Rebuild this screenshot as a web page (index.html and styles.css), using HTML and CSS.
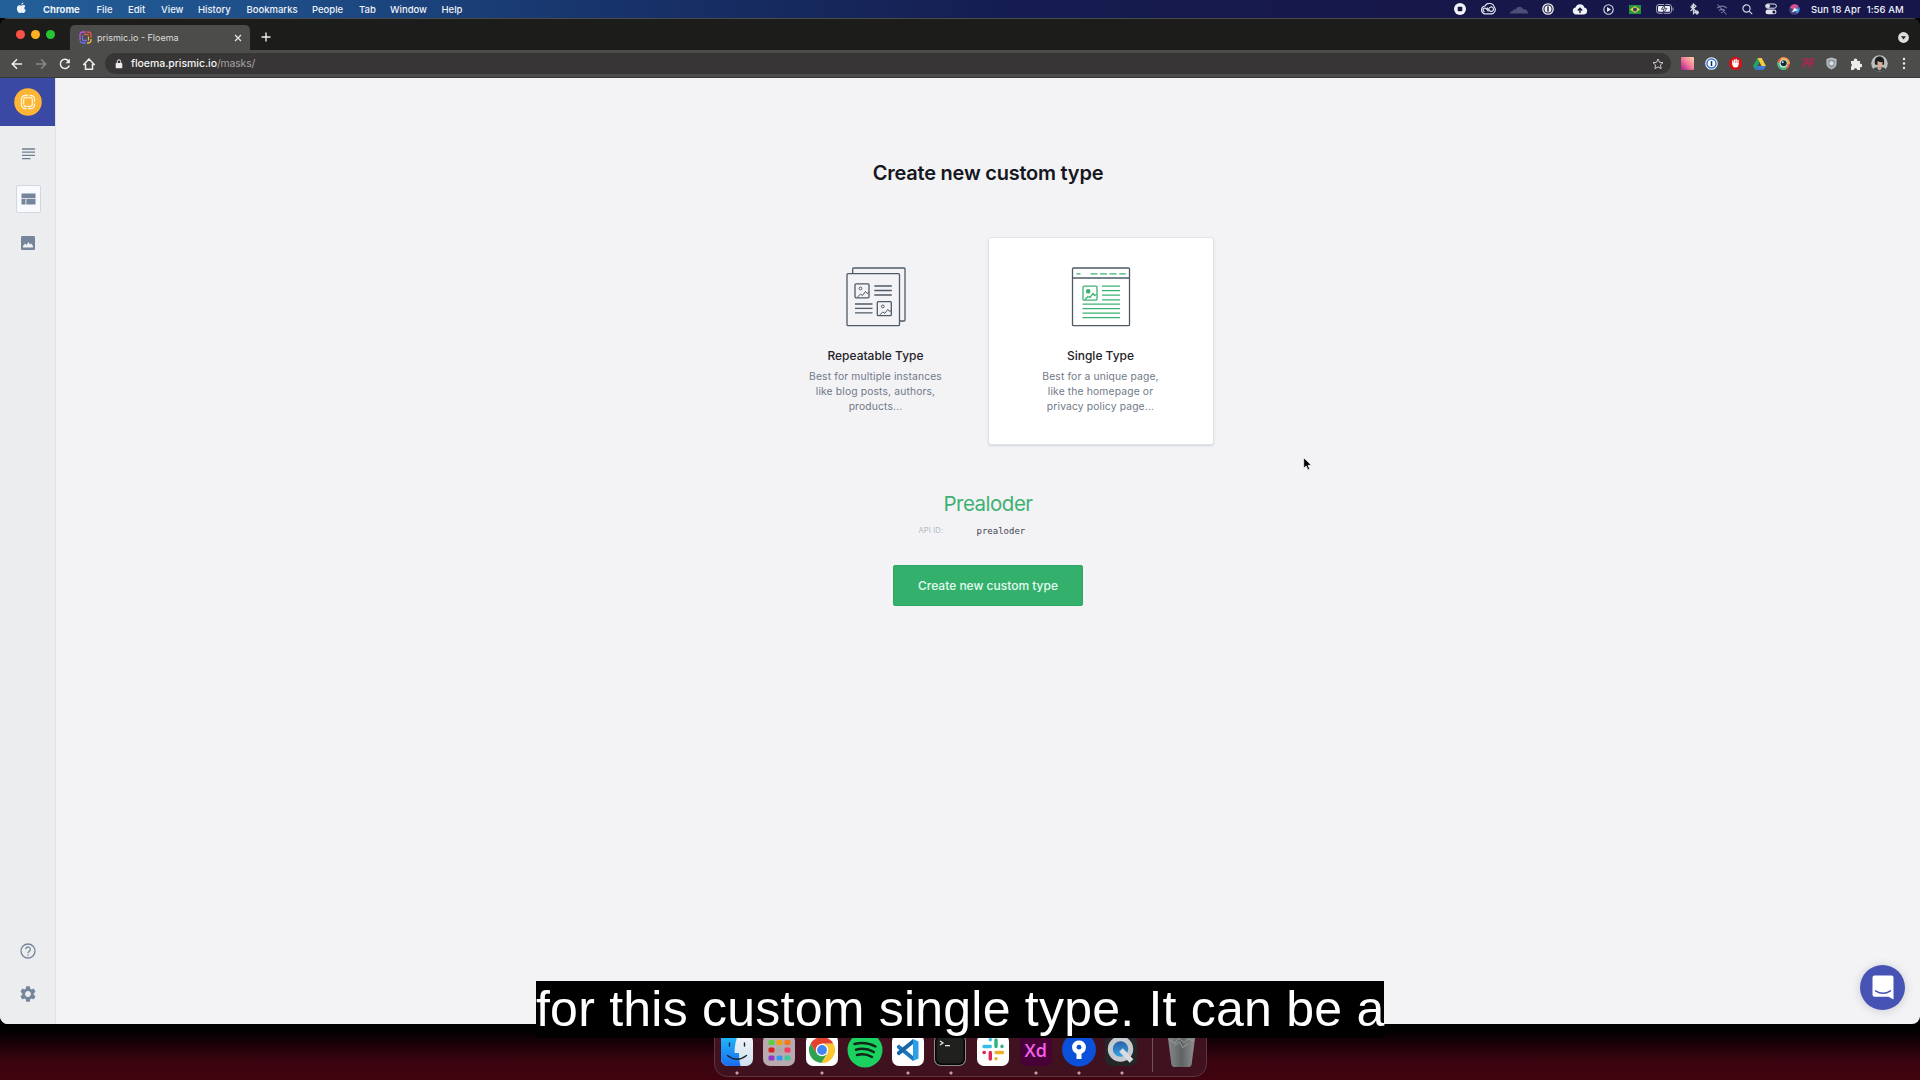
FILE: index.html
```html
<!DOCTYPE html>
<html lang="en">
<head>
<meta charset="utf-8">
<title>prismic.io - Floema</title>
<link rel="stylesheet" href="styles.css">
</head>
<body>
<header class="menubar">
  <svg class="apple" viewBox="0 0 20 24"><path fill="#eef4fa" d="M13.600 1c.2 2-1.900 4.300-4 4.300C9.400 3.300 11.500 1.200 13.600 1zM17 8c-2.800 1.800-2.400 5.800.8 7.200-.8 2.500-2.600 5.300-4.300 5.300-1.400 0-1.900-.8-3.500-.8s-2.200.8-3.500.8C4 20.500 1.500 16 1.500 12c0-4 2.400-6.200 5-6.200 1.500 0 2.600.9 3.600.9s2.200-1 4-1c1.200 0 2.300.7 2.900 2.300z"/></svg>
  <nav class="menus"><b>Chrome</b><span>File</span><span>Edit</span><span>View</span><span>History</span><span>Bookmarks</span><span>People</span><span>Tab</span><span>Window</span><span>Help</span></nav>
  <div class="status">
    <svg width="12" height="12" viewBox="0 0 12 12"><circle cx="6" cy="6" r="6" fill="#f2f2fa"/><rect x="3.700" y="3.700" width="4.600" height="4.600" rx=".7" fill="#17173f"/></svg>
    <svg width="16" height="12" viewBox="0 0 16 12" fill="none" stroke="#e4e4f0" stroke-width="1.200"><path d="M4.500 10.800h7a4 4 0 0 0 2.800-6.600A5 5 0 0 0 5 3 4 4 0 0 0 4.500 10.800z"/><path d="M8.500 8.300 6.200 5.600a1.800 1.800 0 1 0-1.500 3.100M7 4.700l3 3.300a2.200 2.200 0 1 0 .3-3.800c-.7.300-1 .8-1.300 1.300"/></svg>
    <svg width="18" height="9" viewBox="0 0 18 9" fill="#4d4e76"><path d="M0 8.500c0-2 1.500-2.700 2.700-2.500C3.200 4 5 4 5.500 4.800 6.500 1.500 11 .5 13 4.300c3-.5 5 1.500 5 4.200z"/></svg>
    <svg width="12" height="12" viewBox="0 0 12 12"><circle cx="6" cy="6" r="5.200" fill="none" stroke="#eee" stroke-width="1.300"/><circle cx="6" cy="6" r="3.500" fill="#eee"/><rect x="5.300" y="3.400" width="1.400" height="5.200" fill="#17173f"/></svg>
    <svg width="16" height="11" viewBox="0 0 16 11"><path fill="#f2f2fa" d="M4 10.500a3.500 3.500 0 0 1-.5-6.900 4.600 4.600 0 0 1 8.800-.2A3.600 3.600 0 0 1 12 10.500z"/><path d="M8 9V4.500M5.800 6.400 8 4.200l2.200 2.200" fill="none" stroke="#17173f" stroke-width="1.400"/></svg>
    <svg width="11" height="11" viewBox="0 0 11 11"><circle cx="5.500" cy="5.500" r="4.700" fill="none" stroke="#d9d9e6" stroke-width="1.100"/><path d="M4 3v5l4-2.500z" fill="#e6e6f0"/></svg>
    <svg width="12" height="9" viewBox="0 0 12 9"><rect width="12" height="9" fill="#229442"/><path d="m6 1 5 3.500L6 8 1 4.500z" fill="#f2cf32"/><circle cx="6" cy="4.500" r="2" fill="#283980"/></svg>
    <svg width="18" height="10" viewBox="0 0 18 10"><rect x=".5" y=".5" width="15" height="8.800" rx="2.500" fill="none" stroke="#a5a5bd"/><rect x="2" y="2" width="12" height="5.800" rx="1" fill="#f2f2f8"/><path d="M17 3.500v3" stroke="#a5a5bd"/><path d="M9 0 5.500 5.200H8L7 10l3.800-5.700H8.200z" fill="#fff" stroke="#17173f" stroke-width=".8"/></svg>
    <svg width="10" height="12" viewBox="0 0 10 12" fill="none" stroke="#d4d4df" stroke-width="1.200"><path d="M1.500 3.500 7 8 4.500 10.500V1L7 3.200 1.500 8"/><path d="M3.500 1.500v4M8 7.500v4M6 9.500h4" stroke-width="1.800"/></svg>
    <svg width="12" height="11" viewBox="0 0 12 11" fill="none" stroke="#77789c" stroke-width="1.100"><path d="M1 4.200c3-2.500 7-2.500 10 0M3 6.500c2-1.500 4-1.500 6 0M5 8.600q1-.8 2 0M1.500.5l9 10"/></svg>
    <svg width="11" height="11" viewBox="0 0 11 11" fill="none" stroke="#d2d2e0" stroke-width="1.200"><circle cx="4.500" cy="4.500" r="3.600"/><path d="m7.200 7.200 3 3"/></svg>
    <svg width="12" height="12" viewBox="0 0 12 12"><rect x=".6" y="1" width="10.800" height="4.200" rx="2.100" fill="none" stroke="#e2e2ee"/><circle cx="3" cy="3.100" r="2" fill="#e2e2ee"/><rect x=".5" y="6.500" width="11" height="4.800" rx="2.400" fill="#e2e2ee"/><circle cx="8.900" cy="8.900" r="1.500" fill="#17173f"/></svg>
    <svg width="11" height="11" viewBox="0 0 11 11"><circle cx="5.500" cy="5.500" r="5.300" fill="#47427c"/><path d="M1 3.500A5 5 0 0 1 9.500 2L5.500 6z" fill="#df4e92"/><path d="M5 5.500 10 3a5 5 0 0 1-2 6.500z" fill="#3b90da"/><path d="m2.500 8.500 3-4.500L9 6z" fill="#eefaff"/></svg>
  </div>
  <div class="clock"><span>Sun 18 Apr</span><span>1:56 AM</span></div>
</header>

<div class="window">
  <div class="tabstrip">
    <div class="lights"><i class="red"></i><i class="amber"></i><i class="green"></i></div>
    <div class="tab">
      <svg width="13" height="13" viewBox="0 0 13 13" fill="none" stroke-width="1.300"><path d="M1 9V4a3 3 0 0 1 3-3h3" stroke="#b65ad6"/><path d="M8 1h1a3 3 0 0 1 3 3v3M4.500 3.500h4a1 1 0 0 1 1 1" stroke="#e2574b"/><path d="M12 8v1a3 3 0 0 1-3 3H8M9.500 5.500v4" stroke="#e8b64a"/><path d="M7 12H4a3 3 0 0 1-3-2.500M8 9.500H4.500a1 1 0 0 1-1-1V4.500" stroke="#6c6ff0"/></svg>
      <span>prismic.io - Floema</span>
      <svg class="close" width="8" height="8" viewBox="0 0 8 8"><path d="m1 1 6 6M7 1 1 7" stroke="#e6e6e6" stroke-width="1.200"/></svg>
    </div>
    <svg class="plus" width="10" height="10" viewBox="0 0 10 10"><path d="M5 .5v9M.5 5h9" stroke="#eee" stroke-width="1.400"/></svg>
    <svg class="tabsearch" width="11" height="11" viewBox="0 0 11 11"><circle cx="5.500" cy="5.500" r="5.400" fill="#dedede"/><path d="M3 4.200h5L5.500 7.500z" fill="#222"/></svg>
  </div>
  <div class="toolbar">
    <div class="navs">
      <svg viewBox="0 0 12 12"><path d="M11 6H1.500M6 1.300 1.300 6 6 10.700" stroke="#eee"/></svg>
      <svg viewBox="0 0 12 12"><path d="M1 6h9.500M6 1.300 10.700 6 6 10.700" stroke="#898988"/></svg>
      <svg viewBox="0 0 12 12"><path d="M10.300 7.500A4.600 4.600 0 1 1 9.600 3" stroke="#eee"/><path d="M10.900.8v4.400H6.500z" fill="#eee" stroke="none"/></svg>
      <svg viewBox="0 0 12 12"><path d="M.7 6.500 6 1l5.300 5.500H9.500v4.700h-7V6.500z" stroke="#eee"/></svg>
    </div>
    <div class="omnibox">
      <svg width="8" height="10" viewBox="0 0 8 10"><rect x=".7" y="4" width="6.600" height="5.300" rx=".7" fill="#ececec"/><path d="M2.300 4V2.500a1.700 1.700 0 0 1 3.400 0V4" fill="none" stroke="#ececec" stroke-width="1"/></svg>
      <span class="url"><b>floema.prismic.io</b>/masks/</span>
      <svg class="star" width="12" height="12" viewBox="0 0 12 12"><path d="m6 1 1.500 3.300 3.500.4-2.600 2.400.7 3.500L6 8.900l-3.100 1.700.7-3.500L1 4.700l3.500-.4z" fill="none" stroke="#cfcfcf"/></svg>
    </div>
    <div class="extensions">
      <svg width="13" height="13" viewBox="0 0 13 13"><defs><linearGradient id="g1" x1="0" y1="1" x2="1" y2="0"><stop offset="0" stop-color="#a51a8f"/><stop offset=".5" stop-color="#f37a98"/><stop offset="1" stop-color="#ffd6a5"/></linearGradient></defs><rect width="13" height="13" rx="1" fill="url(#g1)"/></svg>
      <svg width="13" height="13" viewBox="0 0 13 13"><circle cx="6.500" cy="6.500" r="6.300" fill="#eef3fb"/><circle cx="6.500" cy="6.500" r="4.500" fill="#fff" stroke="#3377d1" stroke-width="1.500"/><rect x="5.700" y="4" width="1.600" height="5" rx=".6" fill="#17345f"/></svg>
      <svg width="13" height="13" viewBox="0 0 13 13"><path d="M4 0h5l4 4v5l-4 4H4L0 9V4z" fill="#cf1518"/><path d="M3.800 6.500V4M5.500 6V2.800M7.200 6V2.500M9 7V3.500" stroke="#fff" stroke-width="1.300" stroke-linecap="round"/><path d="M3.200 6h6.400c0 3-.6 4.500-3 4.500S3.200 9 3.200 6z" fill="#fff"/></svg>
      <svg width="13" height="12" viewBox="0 0 13 12"><path d="M4.500 0 0 8l2.200 3.800L6.600 4z" fill="#23a566"/><path d="M4.500 0h4.200L13 8H8.600z" fill="#f8cd3c"/><path d="M4.500 8H13l-2.200 3.800H2.200z" fill="#3e7ae0"/></svg>
      <svg width="13" height="13" viewBox="0 0 13 13"><circle cx="6.500" cy="6.500" r="6.300" fill="#e9643f"/><path d="M.3 5A6.300 6.300 0 0 0 10 11.700L6 7z" fill="#43b985"/><path d="M3 1.300A6.300 6.300 0 0 1 12.800 7L7 6z" fill="#f2a355"/><circle cx="6.500" cy="6.500" r="4" fill="#d7f1ec"/><circle cx="6.700" cy="6.300" r="3" fill="#142d34"/><circle cx="5.700" cy="5.200" r=".9" fill="#fff"/></svg>
      <svg width="14" height="11" viewBox="0 0 14 11" fill="none" stroke="#9d2c50" stroke-width="2"><path d="M1 1.500h5.500L6 4.500 1 9.500M2 5h6l2.500 5M8 1.500h4.500L10 5.500h3M6 1.500h3"/></svg>
      <svg width="11" height="13" viewBox="0 0 11 13"><path d="M5.500.5 10.500 2v5c0 3-3 4.500-5 5.500C3.500 11.500.5 10 .5 7V2z" fill="#b9bec4"/><path d="M5.500 2.300 9 3.300V7c0 2-2 3-3.500 4C4 10 2 9 2 7V3.300z" fill="#9299a1"/><circle cx="5.500" cy="6.200" r="2" fill="#dfe2e5"/></svg>
      <svg width="12" height="12" viewBox="0 0 12 12"><path d="M1 3h2.800a1.800 1.800 0 1 1 3.400 0H10v2.800a1.800 1.800 0 1 1 0 3.400V12H7.300a1.800 1.800 0 0 0-3.600 0H1V8.500A1.700 1.700 0 0 0 1 5.500z" fill="#ececec"/></svg>
      <svg width="17" height="17" viewBox="0 0 17 17"><defs><clipPath id="av"><circle cx="8.500" cy="8.500" r="8.300"/></clipPath></defs><g clip-path="url(#av)"><rect width="17" height="17" fill="#b9bdbb"/><path d="M1 17c0-4 4-5 7.500-5S16 13 16 17z" fill="#39434e"/><path d="M6.500 10h4v4l-2 1.500-2-1.500z" fill="#cda38f"/><ellipse cx="8.600" cy="7.800" rx="3" ry="3.800" fill="#d7ad98"/><path d="M4 9.500C3 3.500 5.500 1.500 8.500 1.500S14 3.500 13 9.500L11.500 10V7Q8.500 7.500 6.500 6V10z" fill="#1d1d20"/></g></svg>
      <svg width="4" height="13" viewBox="0 0 4 13" fill="#ececec"><circle cx="2" cy="2" r="1.200"/><circle cx="2" cy="6.500" r="1.200"/><circle cx="2" cy="11" r="1.200"/></svg>
    </div>
  </div>

  <div class="page">
    <aside class="sidebar">
      <div class="logo"><svg width="28" height="28" viewBox="0 0 28 28"><circle cx="14" cy="14" r="13.800" fill="#fdb536"/><g fill="none" stroke="#fff4d8" stroke-width="1.300"><path d="M7.500 18v-7a3.500 3.500 0 0 1 3.500-3.500h3M15.500 7.500H17a3.500 3.500 0 0 1 3.500 3.500v3M20.500 15.500V17a3.500 3.500 0 0 1-3.500 3.500h-3M12.500 20.500H11a3.500 3.500 0 0 1-3.500-3.500"/><path d="M9.700 16v-4.500q0-1.800 1.800-1.800H18M12 9.700h4.500q1.800 0 1.800 1.800V18M18.300 12v4.500q0 1.800-1.800 1.800H10M16 18.300h-4.500q-1.800 0-1.800-1.800" /></g></svg></div>
      <nav class="side-nav">
        <a class="side-link"><svg width="13" height="12" viewBox="0 0 13 12" stroke="#6f7f92" stroke-width="1.300"><path d="M0 1h13M0 4.200h13M0 7.400h13M0 10.600h8.500"/></svg></a>
        <a class="side-link selected"><svg width="15" height="12" viewBox="0 0 15 12" fill="#75859b"><path d="M.5.500h14v4.700H.5zM.5 6h4v5.500h-4zM5.300 6h9.200v5.500H5.300z"/></svg></a>
        <a class="side-link"><svg width="14" height="14" viewBox="0 0 14 14"><rect width="14" height="14" rx="1.300" fill="#75859b"/><path d="M2 11.500V10l2-2.500L5.500 9l2-3L9 8.500l1.200-1L12 10v1.500z" fill="#eef2f4"/></svg></a>
      </nav>
      <nav class="side-foot">
        <svg width="16" height="16" viewBox="0 0 16 16" fill="none" stroke="#75859b" stroke-width="1.300"><circle cx="8" cy="8" r="7"/><path d="M5.700 6.300a2.300 2.300 0 1 1 3.600 1.900C8.300 8.900 8 9.200 8 10.200M8 11.400v1.300"/></svg>
        <svg width="16" height="16" viewBox="2 2 20 20"><path fill="#75859b" d="M19.140 12.940c.04-.3.060-.61.060-.94 0-.32-.02-.64-.07-.94l2.030-1.580a.49.490 0 0 0 .12-.61l-1.920-3.320a.488.488 0 0 0-.59-.22l-2.390.96c-.5-.38-1.030-.7-1.620-.94l-.36-2.540a.484.484 0 0 0-.48-.41h-3.840c-.24 0-.43.170-.47.410l-.36 2.540c-.59.240-1.130.57-1.620.94l-2.390-.96c-.22-.08-.47 0-.59.220L2.740 8.870c-.12.210-.08.470.12.610l2.030 1.580c-.05.300-.09.630-.09.940s.02.640.07.940l-2.030 1.580a.49.490 0 0 0-.12.610l1.920 3.320c.12.220.37.290.59.220l2.390-.96c.5.380 1.030.7 1.620.94l.36 2.540c.05.240.24.410.48.410h3.840c.24 0 .44-.17.470-.41l.36-2.540c.59-.24 1.130-.56 1.620-.94l2.390.96c.22.080.47 0 .59-.22l1.920-3.320c.12-.22.070-.47-.12-.61zM12 15.600A3.610 3.610 0 0 1 8.400 12c0-1.980 1.620-3.600 3.600-3.600s3.600 1.620 3.600 3.600-1.620 3.600-3.600 3.600z"/></svg>
      </nav>
    </aside>
    <main class="content">
      <h1>Create new custom type</h1>
      <div class="types">
        <section class="type">
          <svg width="60" height="60" viewBox="0 0 60 60" fill="none" stroke="#4f5a67" stroke-width="1.300"><rect x="1" y="6.700" width="52.500" height="52" rx="1"/><path d="M6.700 6.700V2q0-1 1-1H58q1 0 1 1v51q0 1-1 1h-4.500"/><rect x="9" y="16.800" width="14" height="14" rx="1"/><rect x="31.300" y="34.700" width="14" height="14" rx="1"/><path d="M28.300 19h17.500M28.300 23.500h17.500M28.300 28h17.500M9 37h17.500M9 41.400h17.500M9 45.900h17.500"/><g stroke-width="1"><path d="m11.500 30 3-3 2 1.500 3-4 1.500 2 2-1M33.800 47.900l3-3 2 1.500 3-4 1.500 2 2-1"/><circle cx="14.500" cy="21.500" r="1.400"/><circle cx="36.800" cy="39.400" r="1.400"/></g></svg>
          <h2>Repeatable Type</h2>
          <p>Best for multiple instances<br>like blog posts, authors,<br>products...</p>
        </section>
        <section class="type chosen">
          <svg width="60" height="60" viewBox="0 0 60 60" fill="none" stroke="#4f5a67" stroke-width="1.300"><rect x="1.500" y="1" width="57" height="57.700" rx="1"/><path d="M1.500 11h57"/><g stroke="#3bb271"><path d="M5.500 6.800h4M19.500 6.800h7M29 6.800h7M38.500 6.800h7M48.300 6.800h6.500M31 19.200h18M31 23.600h18M31 28.200h18M31 32.800h18M11.500 37.200h37.500M11.500 41.600h37.500M11.500 46.200h37.500M11.500 50.700h37.500"/><rect x="12" y="19.200" width="14" height="14" rx="1"/><path d="m14 32.500 3-3 2 1 3-4 1.500 2 2-1"/><circle cx="17.200" cy="24.300" r="1.700" fill="#3bb271"/></g></svg>
          <h2>Single Type</h2>
          <p>Best for a unique page,<br>like the homepage or<br>privacy policy page...</p>
        </section>
      </div>
      <div class="name">Prealoder</div>
      <div class="api"><span>API ID:</span><code>prealoder</code></div>
      <button class="create">Create new custom type</button>
    </main>
    <div class="chat"><svg width="22" height="25" viewBox="0 0 22 25"><path d="M2.500.5h17a2 2 0 0 1 2 2V24.500l-5-2.800h-14a2 2 0 0 1-2-2V2.500a2 2 0 0 1 2-2z" fill="#fff"/><path d="M3.500 15.800q7.500 5 15 0" fill="none" stroke="#4653b4" stroke-width="1.400" stroke-linecap="round"/></svg></div>
  </div>
</div>

<footer class="dock">
  <svg class="app" viewBox="0 0 32 32"><defs><linearGradient id="f1" x2="0" y2="1"><stop stop-color="#1fc0fb"/><stop offset="1" stop-color="#1c6cf0"/></linearGradient><linearGradient id="f2" x2="0" y2="1"><stop stop-color="#f4f4f6"/><stop offset="1" stop-color="#cfe0f0"/></linearGradient></defs><rect width="32" height="32" rx="7" fill="url(#f2)"/><path d="M7 0h10.500C15 5 13.500 12 13.500 19H18c0 5 .5 9 1.500 13H7a7 7 0 0 1-7-7V7a7 7 0 0 1 7-7z" fill="url(#f1)"/><path d="M8.500 9v3M23.500 9v3M6.500 21.500q9.500 7.500 19 0" fill="none" stroke="#15263a" stroke-width="1.400" stroke-linecap="round"/></svg>
  <svg class="app" viewBox="0 0 32 32"><rect width="32" height="32" rx="7" fill="#b8aaae"/><g><rect x="5.500" y="6" width="6" height="5" rx="1.500" fill="#57d23e"/><rect x="13.500" y="6" width="6" height="5" rx="1.500" fill="#f3a10c"/><rect x="21.500" y="6" width="6" height="5" rx="1.500" fill="#f57720"/><rect x="5.500" y="13.500" width="6" height="5" rx="1.500" fill="#d82222"/><rect x="13.500" y="13.500" width="6" height="5" rx="1.500" fill="#aaa9ac"/><rect x="21.500" y="13.500" width="6" height="5" rx="1.500" fill="#f43d60"/><rect x="5.500" y="21.500" width="6" height="5" rx="1.500" fill="#9038c9"/><rect x="13.500" y="21.500" width="6" height="5" rx="1.500" fill="#3199f3"/><rect x="21.500" y="21.500" width="6" height="5" rx="1.500" fill="#45c69c"/></g></svg>
  <svg class="app" viewBox="0 0 32 32"><rect width="32" height="32" rx="7" fill="#fff"/><path d="M4.700 9.500A13 13 0 0 0 15.500 29L21.500 19 16 16l-5.500 3z" fill="#2fa24d"/><path d="M27.300 9.500A13 13 0 0 1 15.500 29l6-10L16 9.500z" fill="#fbc62f"/><path d="M4.700 9.500 10.400 19 16 9.500h11.300A13 13 0 0 0 4.700 9.500z" fill="#e3402f"/><circle cx="16" cy="16" r="6.200" fill="#fff"/><circle cx="16" cy="16" r="4.900" fill="#4285f0"/></svg>
  <svg class="app" viewBox="0 0 32 32" overflow="visible"><circle cx="16" cy="16" r="17.500" fill="#1bd15f"/><path d="M5.500 10q11-3 21 2.500M7 15.700q9.500-2.500 17.800 2.300M8 21q8-2 15 2" fill="none" stroke="#102817" stroke-width="2.500" stroke-linecap="round"/></svg>
  <svg class="app" viewBox="0 0 32 32"><rect width="32" height="32" rx="7" fill="#fff"/><path d="m21 5 5.500 2.500v17L21 27z" fill="#2b9fe8"/><path d="m5 12 2-1.500L21 22v5L5 14z" fill="#1b76bd"/><path d="m5 20 2 1.500L21 10V5L5 18z" fill="#1568a8"/></svg>
  <svg class="app" viewBox="0 0 32 32"><rect width="32" height="32" rx="7" fill="#8e8e8e"/><rect x="1" y="1" width="30" height="30" rx="6" fill="#050505"/><rect x="2.500" y="2.500" width="27" height="27" rx="5" fill="#20211f"/><path d="m6 7 3 2-3 2M11 11.700h5" fill="none" stroke="#ececec" stroke-width="1.200"/></svg>
  <svg class="app" viewBox="0 0 32 32"><rect width="32" height="32" rx="7" fill="#fff"/><g fill="none" stroke-width="3.400" stroke-linecap="round"><path d="M13.300 5.500v.3M7 12.500h6.300" stroke="#36bde8"/><path d="M19 6v6.500M25 12.500v-.2" stroke="#2eb47a"/><path d="M19 18.500h6.500M19 24.800v-.2" stroke="#e9af2d"/><path d="M13.300 18.500V25M7 18.500h.3" stroke="#dd2457"/></g></svg>
  <div class="app xd">Xd</div>
  <svg class="app" viewBox="0 0 32 32" overflow="visible"><circle cx="16" cy="15.500" r="17" fill="#0b50d8"/><path d="M16 6.500a6.800 6.800 0 0 0-2.500 13.200V25h5v-5.300A6.800 6.800 0 0 0 16 6.500z" fill="#fff"/><circle cx="16" cy="13.200" r="2.400" fill="#0b50d8"/></svg>
  <svg class="app" viewBox="0 0 32 32"><defs><linearGradient id="q1" x2="0" y2="1"><stop stop-color="#28579d"/><stop offset="1" stop-color="#35aceb"/></linearGradient></defs><rect width="32" height="32" rx="7" fill="#252628"/><circle cx="15.500" cy="15" r="10.200" fill="url(#q1)" stroke="#c5c9d0" stroke-width="5"/><path d="m16 16 10.500 11" stroke="#d8dce0" stroke-width="5"/></svg>
  <i class="divider"></i>
  <svg class="trash" viewBox="0 0 32 36"><defs><linearGradient id="t1"><stop stop-color="#888b8b"/><stop offset=".5" stop-color="#5f6363"/><stop offset="1" stop-color="#929292"/></linearGradient></defs><path d="M1.500 1h29l-4 31q-.5 3-3 3H8.500q-2.500 0-3-3z" fill="url(#t1)"/><path d="m4 7 5 4 4-6 6 5 4-4 5 2M9 13l5-4 3 6 6-4" stroke="#a4a7a7" stroke-width=".8" fill="none"/></svg>
</footer>
<div class="caption">for this custom single type. It can be a</div>
<svg class="cursor" viewBox="0 0 10 14"><path d="M.7.7v10.500l2.500-2.300 1.700 4 1.800-.8-1.700-3.800h3.400z" fill="#000" stroke="#fff" stroke-width=".7"/></svg>
</body>
</html>
```
FILE: styles.css
```css
* { box-sizing: border-box; }
body {
  margin: 0;
  width: 1920px;
  height: 1080px;
  overflow: hidden;
  position: relative;
  display: flex;
  flex-direction: column;
  align-items: center;
  font-family: Inter, "Liberation Sans", sans-serif;
  background: linear-gradient(#000 1026px, #1a0208 1042px, #38040f 1060px, #41040f 1080px);
}
svg { display: block; flex: none; }

.menubar { width: 100%; height: 18px; flex: none; display: flex; align-items: center; color: #eef3fa; font-size: 9.500px; font-weight: 500; white-space: nowrap; z-index: 2; background: linear-gradient(90deg, #23609a 0, #1e4c86 300px, #17346b 600px, #151d50 1000px, #17174a 1400px, #17164a 100%); }
.apple { width: 11px; height: 13px; margin: 0 16px 1px 16px; }
.menus { display: grid; grid-template-columns: 53.500px 31.500px 33px 37px 48.500px 65.500px 47px 31px 51.500px 40px; }
.menus b { font-weight: 700; }
.status { margin-left: auto; display: grid; grid-template-columns: 29px 28px 34px 24px 39px 19px 34px 26px 32px 23px 28px 19px 28px; place-items: center; }
.clock { width: 112px; padding-left: 3px; display: flex; gap: 6px; letter-spacing: .08px; }

.window { width: 100%; height: 1006px; flex: none; display: flex; flex-direction: column; border-radius: 8px; overflow: hidden; box-shadow: 0 4px 16px 4px #000; z-index: 1; }
.tabstrip { height: 32px; flex: none; display: flex; align-items: flex-end; background: #1c1c1b; border-top: 1px solid #4b4c4c; }
.lights { display: flex; gap: 6px; padding-left: 16px; width: 70px; margin-bottom: 11px; }
.lights i { width: 9px; height: 9px; border-radius: 50%; }
.red { background: #fd5047; }
.amber { background: #fdb021; }
.green { background: #26c532; }
.tab { width: 180px; height: 25px; padding: 0 8px 0 9px; display: flex; align-items: center; gap: 5px; background: #4c4c4a; border-radius: 5px 5px 0 0; color: #dededd; font-size: 9px; }
.tab .close { margin-left: auto; }
.plus { margin: 0 0 8px 11px; }
.tabsearch { margin: 0 11px 7px auto; }

.toolbar { height: 28px; flex: none; display: flex; align-items: center; background: #4c4c4a; border-bottom: 1px solid #383837; }
.navs { display: flex; gap: 12px; padding-left: 11px; width: 105px; }
.navs svg { width: 12px; height: 12px; fill: none; stroke-width: 1.500; }
.omnibox { width: 1566px; height: 21px; border-radius: 11px; background: #373536; display: flex; align-items: center; padding: 0 7px 0 10px; }
.url { margin-left: 8px; color: #a5a4a4; font-size: 10.500px; letter-spacing: -.2px; }
.url b { color: #f4f4f4; font-weight: 500; letter-spacing: -.05px; }
.star { margin-left: auto; }
.extensions { display: grid; grid-template-columns: repeat(10, 24px); place-items: center; margin-left: 4.500px; }

.page { flex: 1; display: flex; background: #f3f3f6; position: relative; }
.sidebar { width: 56px; background: #ebedee; border-right: 1px solid #dfe2e5; display: flex; flex-direction: column; }
.logo { height: 48px; background: #3a49a3; display: flex; align-items: center; justify-content: center; }
.side-nav { display: flex; flex-direction: column; align-items: center; gap: 17px; padding: 14px 0 0 1px; }
.side-link { width: 25px; height: 28px; display: flex; align-items: center; justify-content: center; border: 1px solid transparent; border-radius: 2px; }
.side-link + .side-link { margin-top: -.5px; }
.side-link.selected { background: #f8fafd; border-color: #cfd8e0; }
.side-foot { margin-top: auto; display: flex; flex-direction: column; align-items: center; gap: 27px; padding-bottom: 22px; }

.content { flex: 1; display: flex; flex-direction: column; align-items: center; }
h1 { margin: 83px 0 0; font-size: 20px; line-height: 24px; font-weight: 600; color: #16171d; letter-spacing: -.23px; }
.types { margin-top: 52px; display: flex; }
.type { width: 226px; height: 208px; padding-top: 29px; display: flex; flex-direction: column; align-items: center; text-align: center; border: 1px solid transparent; border-radius: 3px; }
.type.chosen { background: #fff; border-color: #e0e3e8; box-shadow: 0 1px 2px #cfd3d9; margin-left: -1px; }
h2 { margin: 20px 0 0; font-size: 12px; line-height: 18px; font-weight: 500; color: #1f2228; }
.type p { margin: 4px 0 0; font-size: 10.300px; line-height: 15px; color: #717986; letter-spacing: .15px; }
.name { margin-top: 47px; font-size: 20.500px; line-height: 24px; color: #3eb172; letter-spacing: -.5px; }
.api { width: 139px; margin-top: 8px; display: flex; align-items: center; height: 13px; font-size: 7.500px; letter-spacing: .15px; color: #afb9c3; }
.api code { margin-left: auto; width: 81px; letter-spacing: 0; font: 9px "DejaVu Sans Mono", monospace; color: #3d4450; }
.create { margin-top: 28px; width: 190px; height: 41px; border: 1px solid #2fa565; border-radius: 2px; background: #34b06d; color: #e5fbef; font: 500 12px Inter, sans-serif; }
.chat { position: absolute; right: 15px; bottom: 14px; width: 45px; height: 45px; border-radius: 50%; background: #4653b4; display: flex; align-items: center; justify-content: center; box-shadow: 0 1px 10px #c8cacf; }

.dock { margin-top: 3px; width: 493px; height: 50px; flex: none; display: flex; align-items: flex-start; gap: 10.750px; padding: 6px 6px 0; border: 1px solid #603440; border-radius: 0 0 13px 13px; z-index: 2; background-color: #401220;
  /* running-app indicators below the icons */
  background-image: radial-gradient(circle, #c7a0a9 1.300px, transparent 1.800px), radial-gradient(circle, #c7a0a9 1.300px, transparent 1.800px), radial-gradient(circle, #c7a0a9 1.300px, transparent 1.800px), radial-gradient(circle, #c7a0a9 1.300px, transparent 1.800px), radial-gradient(circle, #c7a0a9 1.300px, transparent 1.800px), radial-gradient(circle, #c7a0a9 1.300px, transparent 1.800px), radial-gradient(circle, #c7a0a9 1.300px, transparent 1.800px);
  background-size: 4px 4px; background-repeat: no-repeat;
  background-position: 20px 43px, 105.500px 43px, 191px 43px, 234px 43px, 319.500px 43px, 362px 43px, 405px 43px; }
.app { width: 32px; height: 32px; flex: none; }
.xd { border-radius: 7px; background: #470137; color: #f45fec; font: 600 18px/32px "Open Sans", sans-serif; text-align: center; }
.divider { width: 1px; height: 38px; background: #70505a; margin-left: 4px; }
.trash { width: 31px; height: 35px; margin-left: 2px; margin-top: -1px; }

.caption { position: absolute; z-index: 5; left: 536px; top: 981px; width: 848px; height: 57px; background: #000; color: #fff; font: 50px/57px "Liberation Sans", Arial, sans-serif; letter-spacing: .23px; white-space: nowrap; }
.cursor { position: absolute; z-index: 4; left: 1303px; top: 457px; width: 10px; height: 14px; }
```
